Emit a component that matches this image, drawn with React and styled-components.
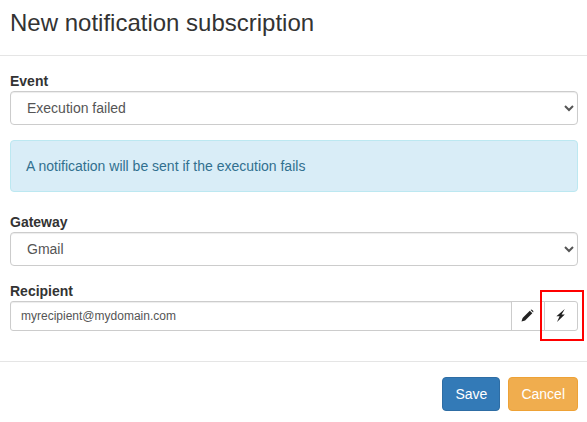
import React from "react";
import styled, { createGlobalStyle } from "styled-components";

const GlobalStyle = createGlobalStyle`
  html, body {
    margin: 0;
    overflow: hidden;
    background: #fff;
  }
  body {
    font-family: "Liberation Sans", Arial, sans-serif;
    font-size: 14px;
    line-height: 20px;
    color: #333;
  }
  * {
    box-sizing: border-box;
  }
`;

export default function App() {
  return (
    <Modal>
      <GlobalStyle />
      <Header>
        <Title>New notification subscription</Title>
      </Header>
      <Body>
        <FormGroup>
          <Label>Event</Label>
          <Select defaultValue="failed">
            <option value="failed">Execution failed</option>
            <option value="success">Execution succeeded</option>
          </Select>
        </FormGroup>
        <Alert>A notification will be sent if the execution fails</Alert>
        <FormGroup>
          <Label>Gateway</Label>
          <Select defaultValue="gmail">
            <option value="gmail">Gmail</option>
          </Select>
        </FormGroup>
        <FormGroup>
          <Label>Recipient</Label>
          <InputGroup>
            <Input defaultValue="myrecipient@mydomain.com" />
            <IconButton type="button" aria-label="Edit">
              <PencilIcon />
            </IconButton>
            <IconButton type="button" aria-label="Test" $last>
              <BoltIcon />
            </IconButton>
          </InputGroup>
        </FormGroup>
      </Body>
      <Footer>
        <Button $bg="#337ab7" $border="#2e6da4">Save</Button>
        <Button $bg="#f0ad4e" $border="#eea236">Cancel</Button>
      </Footer>
      <Highlight />
    </Modal>
  );
}

function PencilIcon() {
  return (
    <svg width="13" height="13" viewBox="0 0 13 13" fill="#222">
      <path d="M0.5 12.5 L1.6 8.9 L8.8 1.7 L11.3 4.2 L4.1 11.4 Z" />
      <path d="M9.6 0.9 Q10.4 0.3 11.2 0.9 L12.1 1.8 Q12.7 2.6 12.1 3.4 L9.6 0.9 Z" />
    </svg>
  );
}

function BoltIcon() {
  return (
    <svg width="9" height="13" viewBox="0 0 9 13" fill="#222">
      <path d="M8.8 0 L0.4 7.3 L3.6 7.3 L1 13 L8.8 5.4 L5.6 5.4 Z" />
    </svg>
  );
}

const Modal = styled.div`
  position: relative;
  width: 587px;
  height: 422px;
  overflow: hidden;
`;

const Header = styled.div`
  height: 56px;
  padding: 9px 10px 0;
  border-bottom: 1px solid #e5e5e5;
`;

const Title = styled.h4`
  margin: 0;
  font-size: 24px;
  font-weight: 500;
  line-height: 27px;
`;

const Body = styled.div`
  padding: 15px 9px 15px 10px;
`;

const FormGroup = styled.div`
  margin-bottom: 15px;
`;

const Label = styled.label`
  display: block;
  font-weight: 700;
`;

const Select = styled.select`
  display: block;
  width: 100%;
  height: 34px;
  padding: 6px 12px;
  font: inherit;
  color: #555;
  background: #fff;
  border: 1px solid #ccc;
  border-radius: 4px;
  box-shadow: inset 0 1px 1px rgba(0, 0, 0, 0.075);
`;

const Alert = styled.div`
  margin-bottom: 20px;
  padding: 15px;
  color: #31708f;
  background: #d9edf7;
  border: 1px solid #bce8f1;
  border-radius: 4px;
`;

const InputGroup = styled.div`
  display: flex;
  height: 30px;
`;

const Input = styled.input`
  flex: 1;
  min-width: 0;
  padding: 5px 10px;
  font: inherit;
  font-size: 12px;
  line-height: 18px;
  color: #555;
  border: 1px solid #ccc;
  border-radius: 3px 0 0 3px;
  box-shadow: inset 0 1px 1px rgba(0, 0, 0, 0.075);
`;

const IconButton = styled.button`
  display: flex;
  align-items: center;
  justify-content: center;
  width: 34px;
  margin-left: -1px;
  padding: 0 1px 2px 0;
  background: #fff;
  border: 1px solid #ccc;
  border-radius: ${(p) => (p.$last ? "0 3px 3px 0" : "0")};
`;

const Highlight = styled.div`
  position: absolute;
  left: 540px;
  top: 290px;
  width: 44px;
  height: 51px;
  border: 2px solid #f00;
  pointer-events: none;
`;

const Footer = styled.div`
  display: flex;
  justify-content: flex-end;
  gap: 8px;
  padding: 15px 9px 15px 10px;
  border-top: 1px solid #e5e5e5;
`;

const Button = styled.button`
  height: 34px;
  padding: 6px 12px;
  font: inherit;
  color: #fff;
  background: ${(p) => p.$bg};
  border: 1px solid ${(p) => p.$border};
  border-radius: 4px;
`;
